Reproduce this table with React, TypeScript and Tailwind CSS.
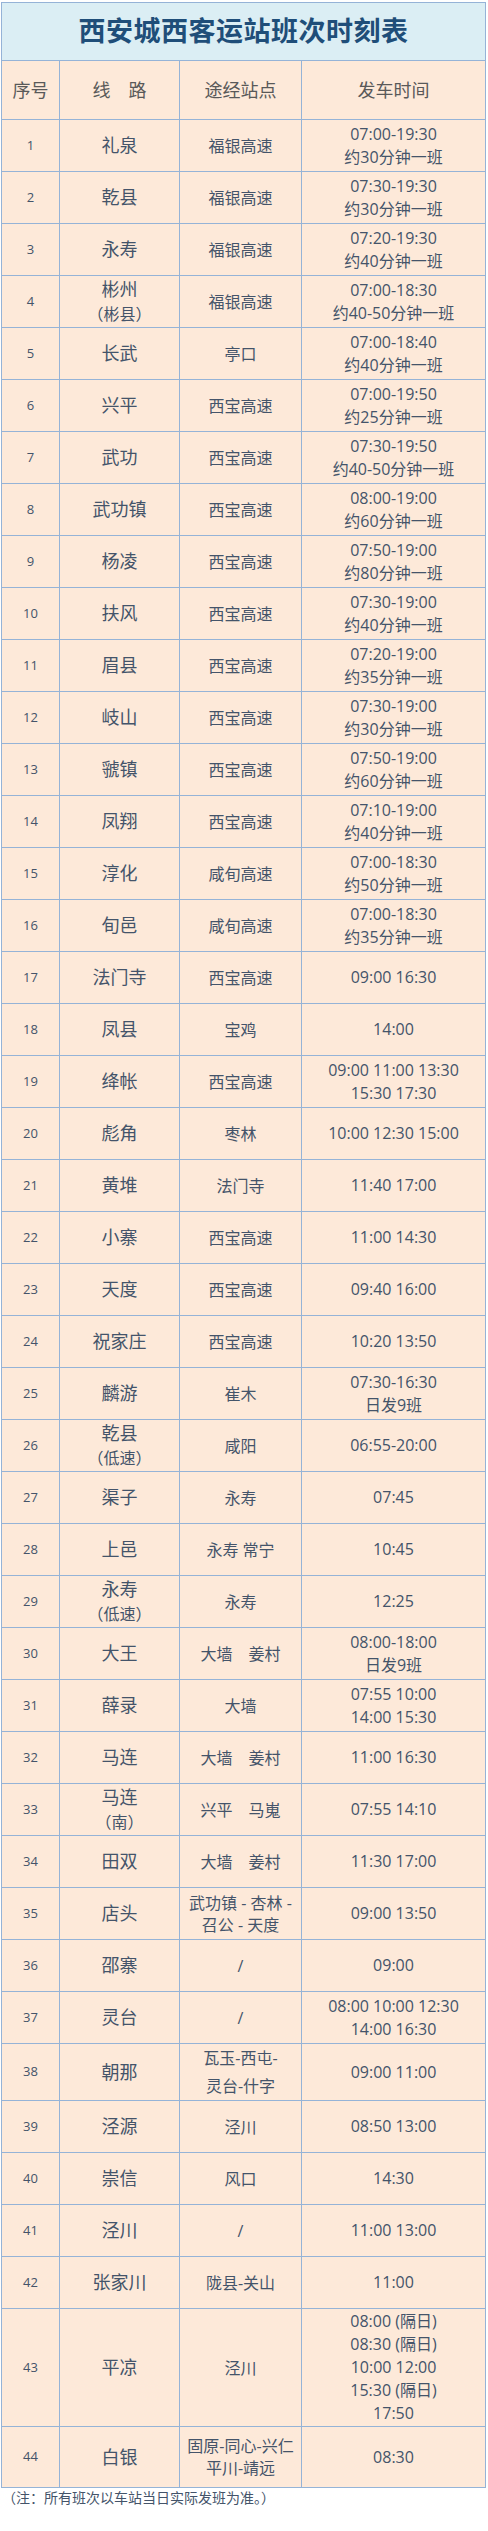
type Row = {
  no: number;
  name: string[];
  via: string[];
  time: string[];
  h?: string;
};

const rows: Row[] = [
  { no: 1, name: ["礼泉"], via: ["福银高速"], time: ["07:00-19:30", "约30分钟一班"] },
  { no: 2, name: ["乾县"], via: ["福银高速"], time: ["07:30-19:30", "约30分钟一班"] },
  { no: 3, name: ["永寿"], via: ["福银高速"], time: ["07:20-19:30", "约40分钟一班"] },
  { no: 4, name: ["彬州", "（彬县）"], via: ["福银高速"], time: ["07:00-18:30", "约40-50分钟一班"] },
  { no: 5, name: ["长武"], via: ["亭口"], time: ["07:00-18:40", "约40分钟一班"] },
  { no: 6, name: ["兴平"], via: ["西宝高速"], time: ["07:00-19:50", "约25分钟一班"] },
  { no: 7, name: ["武功"], via: ["西宝高速"], time: ["07:30-19:50", "约40-50分钟一班"] },
  { no: 8, name: ["武功镇"], via: ["西宝高速"], time: ["08:00-19:00", "约60分钟一班"] },
  { no: 9, name: ["杨凌"], via: ["西宝高速"], time: ["07:50-19:00", "约80分钟一班"] },
  { no: 10, name: ["扶风"], via: ["西宝高速"], time: ["07:30-19:00", "约40分钟一班"] },
  { no: 11, name: ["眉县"], via: ["西宝高速"], time: ["07:20-19:00", "约35分钟一班"] },
  { no: 12, name: ["岐山"], via: ["西宝高速"], time: ["07:30-19:00", "约30分钟一班"] },
  { no: 13, name: ["虢镇"], via: ["西宝高速"], time: ["07:50-19:00", "约60分钟一班"] },
  { no: 14, name: ["凤翔"], via: ["西宝高速"], time: ["07:10-19:00", "约40分钟一班"] },
  { no: 15, name: ["淳化"], via: ["咸旬高速"], time: ["07:00-18:30", "约50分钟一班"] },
  { no: 16, name: ["旬邑"], via: ["咸旬高速"], time: ["07:00-18:30", "约35分钟一班"] },
  { no: 17, name: ["法门寺"], via: ["西宝高速"], time: ["09:00 16:30"] },
  { no: 18, name: ["凤县"], via: ["宝鸡"], time: ["14:00"] },
  { no: 19, name: ["绛帐"], via: ["西宝高速"], time: ["09:00 11:00 13:30", "15:30 17:30"] },
  { no: 20, name: ["彪角"], via: ["枣林"], time: ["10:00 12:30 15:00"] },
  { no: 21, name: ["黄堆"], via: ["法门寺"], time: ["11:40 17:00"] },
  { no: 22, name: ["小寨"], via: ["西宝高速"], time: ["11:00 14:30"] },
  { no: 23, name: ["天度"], via: ["西宝高速"], time: ["09:40 16:00"] },
  { no: 24, name: ["祝家庄"], via: ["西宝高速"], time: ["10:20 13:50"] },
  { no: 25, name: ["麟游"], via: ["崔木"], time: ["07:30-16:30", "日发9班"] },
  { no: 26, name: ["乾县", "（低速）"], via: ["咸阳"], time: ["06:55-20:00"] },
  { no: 27, name: ["渠子"], via: ["永寿"], time: ["07:45"] },
  { no: 28, name: ["上邑"], via: ["永寿 常宁"], time: ["10:45"] },
  { no: 29, name: ["永寿", "（低速）"], via: ["永寿"], time: ["12:25"] },
  { no: 30, name: ["大王"], via: ["大墙　姜村"], time: ["08:00-18:00", "日发9班"] },
  { no: 31, name: ["薛录"], via: ["大墙"], time: ["07:55 10:00", "14:00 15:30"] },
  { no: 32, name: ["马连"], via: ["大墙　姜村"], time: ["11:00 16:30"] },
  { no: 33, name: ["马连", "（南）"], via: ["兴平　马嵬"], time: ["07:55 14:10"] },
  { no: 34, name: ["田双"], via: ["大墙　姜村"], time: ["11:30 17:00"] },
  { no: 35, name: ["店头"], via: ["武功镇 - 杏林 -", "召公 - 天度"], time: ["09:00 13:50"] },
  { no: 36, name: ["邵寨"], via: ["/"], time: ["09:00"] },
  { no: 37, name: ["灵台"], via: ["/"], time: ["08:00 10:00 12:30", "14:00 16:30"] },
  { no: 38, name: ["朝那"], via: ["瓦玉-西屯-", "灵台-什字"], time: ["09:00 11:00"] },
  { no: 39, name: ["泾源"], via: ["泾川"], time: ["08:50 13:00"] },
  { no: 40, name: ["崇信"], via: ["风口"], time: ["14:30"] },
  { no: 41, name: ["泾川"], via: ["/"], time: ["11:00 13:00"] },
  { no: 42, name: ["张家川"], via: ["陇县-关山"], time: ["11:00"] },
  {
    no: 43,
    name: ["平凉"],
    via: ["泾川"],
    time: ["08:00 (隔日)", "08:30 (隔日)", "10:00 12:00", "15:30 (隔日)", "17:50"],
    h: "h-[118px]",
  },
  { no: 44, name: ["白银"], via: ["固原-同心-兴仁", "平川-靖远"], time: ["08:30"], h: "h-[61px]" },
];

const cell = "border border-[#95b3d7] p-0 text-center align-middle";

export default function App() {
  return (
    <div className="w-[488px] bg-white pt-[2px] font-['Open_Sans','Noto_Sans_CJK_SC',sans-serif] text-[#44546a]">
      <table className="ml-[1px] w-[484px] table-fixed border-collapse bg-[#fde9d9]">
        <colgroup>
          <col className="w-[58px]" />
          <col className="w-[120px]" />
          <col className="w-[122px]" />
          <col className="w-[184px]" />
        </colgroup>
        <tbody>
          {/* title */}
          <tr>
            <td colSpan={4} className={`${cell} h-[58px] bg-[#dbeef4]`}>
              <span className="text-[27px] font-bold tracking-[0.5px] text-[#1f4e79]">
                西安城西客运站班次时刻表
              </span>
            </td>
          </tr>
          {/* header */}
          <tr className="text-[18px] text-[#595959]">
            <td className={`${cell} h-[59px]`}>序号</td>
            <td className={cell}>线　路</td>
            <td className={cell}>途经站点</td>
            <td className={cell}>发车时间</td>
          </tr>
          {rows.map((r) => (
            <tr key={r.no}>
              <td className={`${cell} ${r.h ?? "h-[52px]"} text-[13px]`}>{r.no}</td>
              <td className={cell}>
                <div className="text-[18px] leading-[25px]">{r.name[0]}</div>
                {r.name[1] && <div className="text-[16px] leading-[24px]">{r.name[1]}</div>}
              </td>
              <td className={`${cell} text-[16px] ${r.no === 38 ? "leading-[28px]" : "leading-[22px]"}`}>
                {r.via.map((v) => (
                  <div key={v} className="whitespace-pre">{v}</div>
                ))}
              </td>
              <td className={`${cell} text-[16px] leading-[23px]`}>
                {r.time.map((t) => (
                  <div key={t}>{t}</div>
                ))}
              </td>
            </tr>
          ))}
        </tbody>
      </table>
      <p className="pl-[2px] text-[14px] leading-[20px] text-[#44546a]">
        （注：所有班次以车站当日实际发班为准。）
      </p>
    </div>
  );
}
